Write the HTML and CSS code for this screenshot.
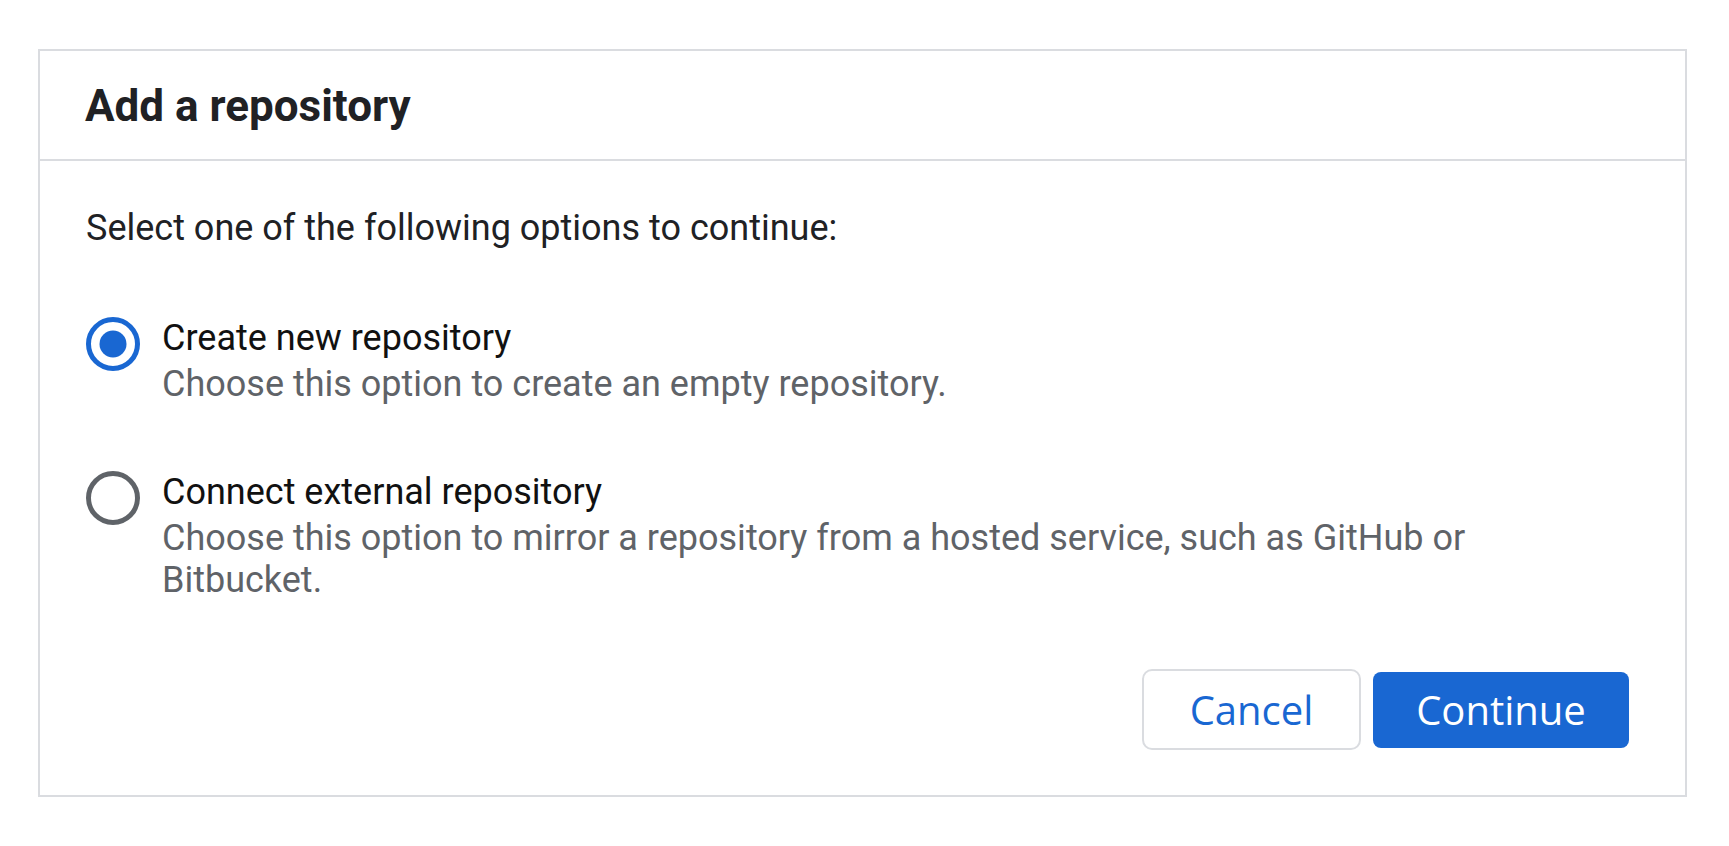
FILE: index.html
```html
<!DOCTYPE html>
<html lang="en">
<head>
<meta charset="utf-8">
<title>Add a repository</title>
<link rel="stylesheet" href="styles.css">
</head>
<body>
<div class="page">
  <section class="dialog">
    <header class="dialog-header">
      <h1 class="dialog-title">Add a repository</h1>
    </header>
    <div class="dialog-body">
      <p class="intro">Select one of the following options to continue:</p>
      <div class="options">
        <label class="option">
          <span class="radio">
            <svg width="54" height="54" viewBox="0 0 54 54"><circle cx="27" cy="27" r="24.5" fill="none" stroke="#1967d2" stroke-width="5"/><circle cx="27" cy="27" r="13.5" fill="#1967d2"/></svg>
          </span>
          <span class="option-text">
            <span class="option-label">Create new repository</span>
            <span class="option-desc">Choose this option to create an empty repository.</span>
          </span>
        </label>
        <label class="option">
          <span class="radio">
            <svg width="54" height="54" viewBox="0 0 54 54"><circle cx="27" cy="27" r="24.5" fill="none" stroke="#5f6368" stroke-width="5"/></svg>
          </span>
          <span class="option-text">
            <span class="option-label">Connect external repository</span>
            <span class="option-desc">Choose this option to mirror a repository from a hosted service, such as GitHub or Bitbucket.</span>
          </span>
        </label>
      </div>
    </div>
    <footer class="dialog-footer">
      <button class="btn btn-cancel">Cancel</button>
      <button class="btn btn-primary">Continue</button>
    </footer>
  </section>
</div>
</body>
</html>
```

FILE: styles.css
```css
html, body {
  margin: 0;
  padding: 0;
  background: #ffffff;
}

.page {
  padding: 49px 0 0 38px;
  font-family: Roboto, "Liberation Sans", Arial, sans-serif;
}

.dialog {
  box-sizing: border-box;
  width: 1649px;
  border: 2px solid #dadce0;
  background: #ffffff;
}

.dialog-header {
  height: 108px;
  display: flex;
  align-items: center;
  padding: 0 45px;
  border-bottom: 2px solid #dadce0;
}

.dialog-title {
  margin: 0;
  font-size: 44px;
  line-height: 52px;
  font-weight: 700;
  color: #202124;
  padding-top: 2px;
}

.dialog-body {
  padding: 45px 48px 0 46px;
}

.intro {
  margin: 0 0 63px;
  font-size: 36px;
  line-height: 44px;
  color: #202124;
}

.options {
  display: flex;
  flex-direction: column;
  gap: 62px;
}

.option {
  display: flex;
  align-items: flex-start;
  gap: 22px;
}

.radio {
  flex: none;
  width: 54px;
  height: 54px;
  margin-top: 4px;
}

.radio svg {
  display: block;
}

.option-text {
  display: flex;
  flex-direction: column;
  max-width: 1360px;
}

.option-label {
  font-size: 36px;
  line-height: 50px;
  color: #111111;
}

.option-desc {
  font-size: 36px;
  line-height: 42px;
  color: #5f6368;
}

.dialog-footer {
  display: flex;
  justify-content: flex-end;
  align-items: center;
  gap: 12px;
  padding: 68px 56px 45px 46px;
}

.btn {
  font-family: "Open Sans", "Liberation Sans", sans-serif;
  font-size: 40px;
  font-weight: 500;
  box-sizing: border-box;
  cursor: pointer;
  margin: 0;
  padding: 0;
}

.btn-cancel {
  width: 219px;
  height: 81px;
  background: #ffffff;
  color: #1967d2;
  border: 2px solid #dadce0;
  border-radius: 10px;
}

.btn-primary {
  width: 256px;
  height: 76px;
  background: #1967d2;
  color: #ffffff;
  border: none;
  border-radius: 8px;
}
```
